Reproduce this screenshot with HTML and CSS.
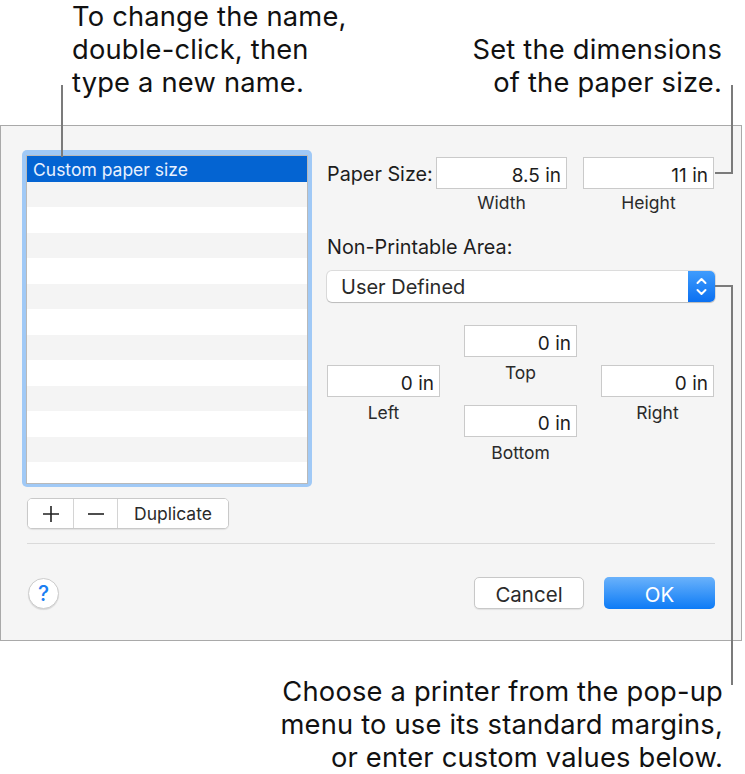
FILE: index.html
```html
<!DOCTYPE html>
<html lang="en">
<head>
    <meta charset="UTF-8">
    <meta name="viewport" content="width=device-width, initial-scale=1.0">
    <title>Custom Paper Size</title>
    <link rel="stylesheet" href="styles.css">
</head>
<body>

<div class="page">
    <!-- Top callouts -->
    <div class="callouts-top">
        <p class="callout callout-left">To change the name,<br>double-click, then<br>type a new name.</p>
        <p class="callout callout-right">Set the dimensions<br>of the paper size.</p>
    </div>

    <!-- Dialog -->
    <div class="dialog">
        <div class="dialog-main">
            <div class="list-side">
                <div class="list-ring">
                    <div class="list">
                        <div class="row selected">Custom paper size</div>
                        <div class="row"></div>
                        <div class="row"></div>
                        <div class="row"></div>
                        <div class="row"></div>
                        <div class="row"></div>
                        <div class="row"></div>
                        <div class="row"></div>
                        <div class="row"></div>
                        <div class="row"></div>
                        <div class="row"></div>
                        <div class="row"></div>
                        <div class="row"></div>
                    </div>
                </div>
                <div class="segmented">
                    <button class="seg seg-plus" aria-label="Add">
                        <svg width="18" height="18" viewBox="0 0 18 18">
                            <path d="M9 1 V17 M1 9 H17" stroke="#222" stroke-width="1.6" fill="none"/>
                        </svg>
                    </button>
                    <button class="seg seg-minus" aria-label="Remove">
                        <svg width="18" height="18" viewBox="0 0 18 18">
                            <path d="M1 9 H17" stroke="#222" stroke-width="1.6" fill="none"/>
                        </svg>
                    </button>
                    <button class="seg seg-dup">Duplicate</button>
                </div>
            </div>

            <div class="settings">
                <div class="paper-row">
                    <span class="paper-label">Paper Size:</span>
                    <div class="field paper-field">8.5 in</div>
                    <div class="field paper-field">11 in</div>
                </div>
                <div class="paper-sub">
                    <span class="sub-label">Width</span>
                    <span class="sub-label">Height</span>
                </div>

                <p class="area-label">Non-Printable Area:</p>

                <div class="popup">
                    <span class="popup-text">User Defined</span>
                    <span class="popup-arrows">
                        <svg width="27" height="31" viewBox="0 0 27 31">
                            <path d="M9.5 12 L13.5 8 L17.5 12" fill="none" stroke="#fff" stroke-width="2" stroke-linecap="round" stroke-linejoin="round"/>
                            <path d="M9.5 19 L13.5 23 L17.5 19" fill="none" stroke="#fff" stroke-width="2" stroke-linecap="round" stroke-linejoin="round"/>
                        </svg>
                    </span>
                </div>

                <div class="margins">
                    <div class="margin-item side">
                        <div class="field">0 in</div>
                        <span class="sub-label">Left</span>
                    </div>
                    <div class="margin-col">
                        <div class="margin-item">
                            <div class="field">0 in</div>
                            <span class="sub-label">Top</span>
                        </div>
                        <div class="margin-item bottom">
                            <div class="field">0 in</div>
                            <span class="sub-label">Bottom</span>
                        </div>
                    </div>
                    <div class="margin-item side">
                        <div class="field">0 in</div>
                        <span class="sub-label">Right</span>
                    </div>
                </div>
            </div>
        </div>

        <div class="separator"></div>

        <div class="dialog-footer">
            <button class="help-btn">?</button>
            <div class="actions">
                <button class="btn cancel-btn">Cancel</button>
                <button class="btn ok-btn">OK</button>
            </div>
        </div>
    </div>

    <!-- Bottom callout -->
    <p class="callout callout-bottom">Choose a printer from the pop-up<br>menu to use its standard margins,<br>or enter custom values below.</p>

    <!-- Leader lines -->
    <svg class="leaders" width="745" height="774" viewBox="0 0 745 774">
        <path d="M62 85 V157" />
        <path d="M732 85 V173 H715" />
        <path d="M715 286 H732 V685" />
    </svg>
</div>

</body>
</html>
```

FILE: styles.css
```css
/* General Styling */
* {
    box-sizing: border-box;
    margin: 0;
    padding: 0;
}

body {
    background: #fff;
    font-family: Inter, "Noto Sans", sans-serif;
    color: #1d1d1d;
}

.page {
    position: relative;
    width: 745px;
    height: 774px;
    overflow: hidden;
}

/* Callouts */
.callout {
    font-size: 27.3px;
    line-height: 33px;
    color: #111;
    letter-spacing: 0.2px;
}

.callouts-top {
    height: 125px;
    display: flex;
    justify-content: space-between;
    align-items: flex-start;
}

.callout-left {
    margin-left: 72px;
}

.callout-right {
    margin-top: 33px;
    margin-right: 23px;
    text-align: right;
}

.callout-bottom {
    margin-top: 34px;
    margin-right: 22px;
    text-align: right;
}

.leaders {
    position: absolute;
    left: 0;
    top: 0;
    pointer-events: none;
}

.leaders path {
    fill: none;
    stroke: #7b7b7b;
    stroke-width: 2;
}

/* Dialog */
.dialog {
    width: 742px;
    height: 516px;
    border: 1px solid #a9a9a9;
    background: #f5f5f5;
    padding: 24px 26px 0 21px;
}

.dialog-main {
    display: flex;
    gap: 15px;
}

.list-side {
    width: 290px;
}

.list-ring {
    height: 337px;
    padding: 5px 4px 3px;
    border-radius: 5px;
    background: #a0c9f6;
}

.list {
    height: 329px;
    border: 1px solid #b9b9b9;
    background: #fff;
    overflow: hidden;
}

.row {
    height: 25.5px;
    line-height: 27px;
    font-size: 17.5px;
    padding-left: 6px;
}

.row:nth-child(even) {
    background: #f4f4f4;
}

.row.selected {
    background: #0464d2;
    color: #e9f1ff;
}

/* Segmented control */
.segmented {
    display: inline-flex;
    margin-top: 11px;
    margin-left: 5px;
    height: 31px;
    background: #fff;
    border: 1px solid #c9c9c9;
    border-radius: 5px;
    box-shadow: 0 1px 1px rgba(0, 0, 0, 0.08);
    overflow: hidden;
}

.seg {
    display: flex;
    align-items: center;
    justify-content: center;
    border: none;
    background: #fff;
    font-family: Inter, "Noto Sans", sans-serif;
    color: #2a2a2a;
    font-size: 17.5px;
    border-left: 1px solid #d4d4d4;
}

.seg-plus {
    width: 45px;
    border-left: none;
}

.seg-minus {
    width: 44px;
}

.seg-dup {
    width: 111px;
}

/* Settings column */
.settings {
    width: 388px;
    padding-top: 7px;
}

.paper-row {
    display: flex;
    align-items: flex-start;
}

.paper-label {
    width: 109px;
    height: 32px;
    padding-top: 3px;
    font-size: 19.8px;
    line-height: 29px;
    white-space: nowrap;
}

.field {
    height: 32px;
    background: #fff;
    border: 1px solid #cacaca;
    font-size: 19px;
    line-height: 30px;
    padding-top: 3px;
    text-align: right;
    padding-right: 5px;
    color: #1d1d1d;
}

.paper-field {
    width: 131px;
}

.paper-field + .paper-field {
    margin-left: 16px;
}

.paper-sub {
    display: flex;
    gap: 16px;
    margin-left: 109px;
    margin-top: 4px;
}

.sub-label {
    display: block;
    width: 131px;
    font-size: 17.5px;
    line-height: 20px;
    text-align: center;
    color: #2a2a2a;
}

.area-label {
    margin-top: 22px;
    font-size: 19.8px;
    line-height: 24px;
}

/* Pop-up menu */
.popup {
    display: flex;
    justify-content: space-between;
    margin-top: 12px;
    height: 31px;
    background: #fff;
    border-radius: 5px;
    box-shadow: 0 0 0 1px rgba(0, 0, 0, 0.1), 0 1px 1px rgba(0, 0, 0, 0.15);
}

.popup-text {
    padding-left: 14px;
    font-size: 20px;
    line-height: 32px;
    color: #2a2a2a;
}

.popup-arrows {
    width: 27px;
    height: 31px;
    border-radius: 0 5px 5px 0;
    background: linear-gradient(#3f9cfd, #0b70f1);
}

/* Margin fields */
.margins {
    display: grid;
    grid-template-columns: 113px 113px 113px;
    gap: 24px;
    margin-top: 23px;
}

.margin-item .sub-label {
    width: 100%;
    margin-top: 6px;
}

.margin-item.side {
    margin-top: 40px;
}

.margin-item.bottom {
    margin-top: 22px;
}

/* Footer */
.separator {
    margin: 14px 0 0 5px;
    border-top: 1px solid #dadada;
}

.dialog-footer {
    display: flex;
    justify-content: space-between;
    align-items: center;
    margin-top: 33px;
    padding-left: 6px;
}

.help-btn {
    width: 31px;
    height: 31px;
    border-radius: 50%;
    border: 1px solid #cdcdcd;
    background: #fff;
    box-shadow: 0 1px 1px rgba(0, 0, 0, 0.12);
    color: #1b7ef2;
    font-family: Inter, "Noto Sans", sans-serif;
    font-size: 21px;
    font-weight: 500;
}

.actions {
    display: flex;
    gap: 20px;
}

.btn {
    height: 32px;
    border-radius: 5px;
    font-family: Inter, "Noto Sans", sans-serif;
    font-size: 20.5px;
    padding-top: 2px;
}

.cancel-btn {
    width: 110px;
    background: #fff;
    border: 1px solid #c8c8c8;
    box-shadow: 0 1px 1px rgba(0, 0, 0, 0.08);
    color: #2a2a2a;
}

.ok-btn {
    width: 111px;
    border: none;
    background: linear-gradient(#6ab2fb, #0d7bf6);
    color: #fff;
}
```
